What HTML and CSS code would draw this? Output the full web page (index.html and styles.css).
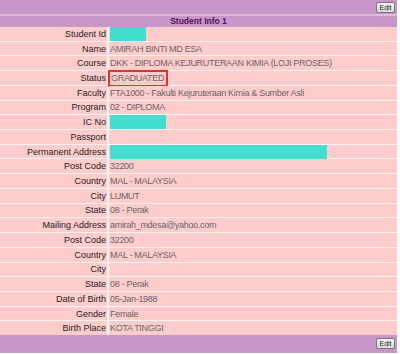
FILE: index.html
```html
<!DOCTYPE html>
<html>
<head>
<meta charset="utf-8">
<link rel="stylesheet" href="styles.css">
</head>
<body>
<div class="panel">
  <div class="bar"><button class="edit">Edit</button></div>
  <div class="title">Student Info 1</div>
  <div class="grid">
    <div class="lbl">Student Id</div><div class="val"><span class="mask mask-id"></span></div>
    <div class="lbl">Name</div><div class="val">AMIRAH BINTI MD ESA</div>
    <div class="lbl">Course</div><div class="val">DKK - DIPLOMA KEJURUTERAAN KIMIA (LOJI PROSES)</div>
    <div class="lbl">Status</div><div class="val"><span class="status">GRADUATED</span></div>
    <div class="lbl">Faculty</div><div class="val">FTA1000 - Fakulti Kejuruteraan Kimia &amp; Sumber Asli</div>
    <div class="lbl">Program</div><div class="val">02 - DIPLOMA</div>
    <div class="lbl">IC No</div><div class="val"><span class="mask mask-ic"></span></div>
    <div class="lbl">Passport</div><div class="val"></div>
    <div class="lbl">Permanent Address</div><div class="val"><span class="mask mask-addr"></span></div>
    <div class="lbl">Post Code</div><div class="val">32200</div>
    <div class="lbl">Country</div><div class="val">MAL - MALAYSIA</div>
    <div class="lbl">City</div><div class="val">LUMUT</div>
    <div class="lbl">State</div><div class="val">08 - Perak</div>
    <div class="lbl">Mailing Address</div><div class="val">amirah_mdesa@yahoo.com</div>
    <div class="lbl">Post Code</div><div class="val">32200</div>
    <div class="lbl">Country</div><div class="val">MAL - MALAYSIA</div>
    <div class="lbl">City</div><div class="val"></div>
    <div class="lbl">State</div><div class="val">08 - Perak</div>
    <div class="lbl">Date of Birth</div><div class="val">05-Jan-1988</div>
    <div class="lbl">Gender</div><div class="val">Female</div>
    <div class="lbl">Birth Place</div><div class="val">KOTA TINGGI</div>
  </div>
  <div class="bar bottom"><button class="edit">Edit</button></div>
</div>
</body>
</html>
```
FILE: styles.css
```css
html, body {
  margin: 0;
  padding: 0;
  background: #ffffff;
}
.panel {
  width: 397px;
  display: flex;
  flex-direction: column;
  font-family: "Liberation Sans", Arial, sans-serif;
}
.bar {
  height: 14px;
  background: #c996c9;
  border-bottom: 2px solid #dcbcdc;
  display: flex;
  justify-content: flex-end;
  align-items: center;
  padding-right: 2px;
}
.bar.bottom {
  border-bottom: none;
  height: 18px;
  align-items: flex-start;
  padding-top: 3px;
  box-sizing: border-box;
}
.edit {
  font-family: "Liberation Sans", Arial, sans-serif;
  font-size: 7px;
  line-height: 9px;
  height: 11px;
  width: 19px;
  padding: 0;
  color: #222;
  background: linear-gradient(#f8f8f8, #d8d8d8);
  border: 1px solid #777;
  border-radius: 2px;
}
.title {
  height: 11px;
  background: #c996c9;
  color: #551155;
  font-weight: bold;
  font-size: 8.5px;
  line-height: 11px;
  text-align: center;
}
.grid {
  display: grid;
  grid-template-columns: 107px 1fr;
  grid-auto-rows: 13.72px;
  column-gap: 2px;
  row-gap: 1px;
  background: #fff4f4;
  font-size: 9px;
}
.lbl, .val {
  background: #ffcccc;
  display: flex;
  align-items: center;
  white-space: nowrap;
  overflow: visible;
}
.lbl {
  justify-content: flex-end;
  padding-right: 1px;
  color: #222222;
}
.val {
  padding-left: 1px;
  color: #666666;
  letter-spacing: -0.3px;
}
.mask {
  display: block;
  background: #40e0d0;
  height: 14px;
}
.mask-id { width: 36px; }
.mask-ic { width: 56px; }
.mask-addr { width: 217px; }
.status {
  border: 2px solid #dd3333;
  padding: 1px 2px 1px 1px;
  margin-left: -2px;
  line-height: 11px;
}
```
